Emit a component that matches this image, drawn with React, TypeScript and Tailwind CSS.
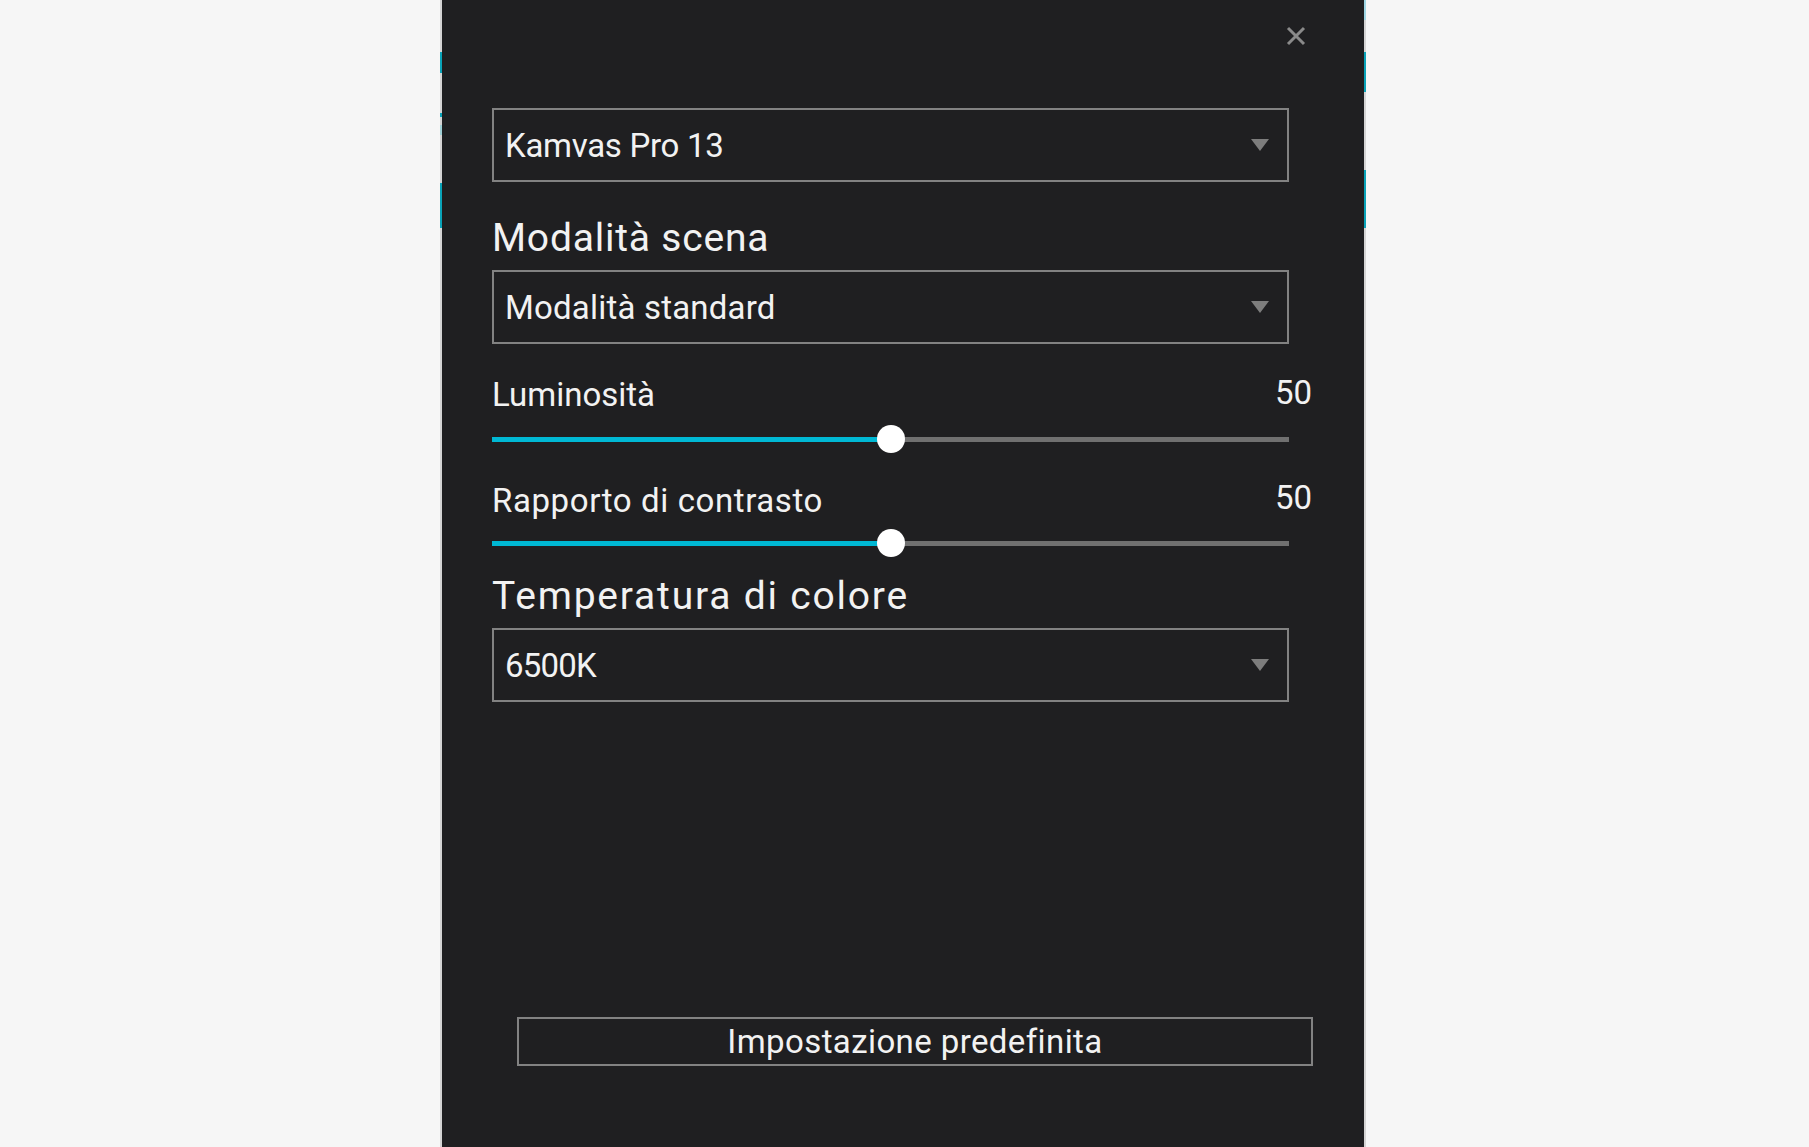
import { useState } from "react";

const font = "font-['Roboto','Liberation_Sans',sans-serif]";

function Dropdown({ value, tracking }: { value: string; tracking: string }) {
  return (
    <div className="flex h-[74px] w-[797px] items-center justify-between border-2 border-[#828282] pl-[11px] pr-[18px]">
      <span className={`text-[33px] leading-none text-[#f2f2f2] ${tracking}`}>{value}</span>
      <svg width="18" height="12" viewBox="0 0 18 12">
        <polygon points="0,0 18,0 9,12" fill="#7d7d7d" />
      </svg>
    </div>
  );
}

function Slider({ value }: { value: number }) {
  return (
    <div className="relative flex h-[28px] w-[797px] items-center">
      <div className="h-[5px] bg-[#00b8d4]" style={{ width: `${value}%` }} />
      <div className="h-[5px] flex-1 bg-[#707070]" />
      <div
        className="absolute top-0 h-[28px] w-[28px] -translate-x-1/2 rounded-full bg-white"
        style={{ left: `${value}%` }}
      />
    </div>
  );
}

export default function App() {
  const [brightness] = useState(50);
  const [contrast] = useState(50);

  return (
    <div className={`flex h-[1147px] w-full bg-[#f6f6f6] ${font}`}>
      <div className="relative ml-[442px] flex h-full w-[922px] flex-col bg-[#1f1f21] pl-[50px]">
        {/* edge slivers of the window behind */}
        <div className="absolute -left-[2px] top-0 h-full w-[2px] bg-[#d4d4d4]" />
        <div className="absolute -left-[2px] top-[52px] h-[21px] w-[2px] bg-[#0aa3b8]" />
        <div className="absolute -left-[2px] top-[113px] h-[4px] w-[2px] bg-[#0aa3b8]" />
        <div className="absolute -left-[2px] top-[125px] h-[10px] w-[2px] bg-[#9fd0d6]" />
        <div className="absolute -left-[2px] top-[183px] h-[45px] w-[2px] bg-[#0aa3b8]" />
        <div className="absolute -right-[2px] top-0 h-full w-[2px] bg-[#d4d4d4]" />
        <div className="absolute -right-[2px] top-0 h-[20px] w-[2px] bg-[#9fd6e4]" />
        <div className="absolute -right-[2px] top-[52px] h-[40px] w-[2px] bg-[#0aa3b8]" />
        <div className="absolute -right-[2px] top-[170px] h-[58px] w-[2px] bg-[#0aa3b8]" />

        {/* close */}
        <button className="absolute right-[58px] top-[26px] h-[20px] w-[20px]" aria-label="Chiudi">
          <svg width="20" height="20" viewBox="0 0 20 20">
            <path d="M2 2L18 18M18 2L2 18" stroke="#8a8a8a" strokeWidth="3" />
          </svg>
        </button>

        <div className="mt-[108px]">
          <Dropdown value="Kamvas Pro 13" tracking="tracking-[-0.3px]" />
        </div>

        <h2 className="mt-[37px] text-[39px] font-normal leading-[39px] tracking-[0.8px] text-[#f2f2f2]">
          Modalità scena
        </h2>

        <div className="mt-[12px]">
          <Dropdown value="Modalità standard" tracking="tracking-[0.2px]" />
        </div>

        <div className="mt-[34px] flex w-[820px] items-start justify-between text-[33px] leading-[33px] text-[#f2f2f2]">
          <span>Luminosità</span>
          <span className="-mt-[2px]">{brightness}</span>
        </div>
        <div className="mt-[14px]">
          <Slider value={brightness} />
        </div>

        <div className="mt-[31px] flex w-[820px] items-start justify-between text-[33px] leading-[33px] text-[#f2f2f2]">
          <span className="tracking-[0.6px]">Rapporto di contrasto</span>
          <span className="-mt-[3px]">{contrast}</span>
        </div>
        <div className="mt-[12px]">
          <Slider value={contrast} />
        </div>

        <h2 className="mt-[20px] text-[39px] font-normal leading-[39px] tracking-[1.8px] text-[#f2f2f2]">
          Temperatura di colore
        </h2>

        <div className="mt-[12px]">
          <Dropdown value="6500K" tracking="tracking-[-0.8px]" />
        </div>

        <button className="ml-[25px] mt-[315px] flex h-[49px] w-[796px] items-center justify-center border-2 border-[#828282] text-[33px] leading-none tracking-[0.4px] text-[#f2f2f2]">
          Impostazione predefinita
        </button>
      </div>
    </div>
  );
}
